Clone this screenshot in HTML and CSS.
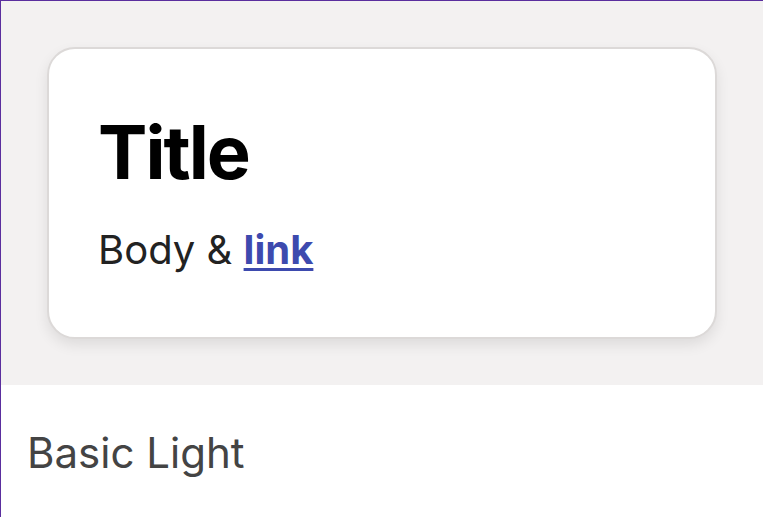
FILE: index.html
```html
<!DOCTYPE html>
<html lang="en">
<head>
<meta charset="UTF-8">
<meta name="viewport" content="width=device-width, initial-scale=1.0">
<title>Basic Light</title>
<link rel="stylesheet" href="styles.css">
</head>
<body>

<div class="frame">
    <div class="preview">
        <div class="card">
            <h1>Title</h1>
            <p>Body &amp; <a href="#">link</a></p>
        </div>
    </div>
    <div class="label">Basic Light</div>
</div>

</body>
</html>
```

FILE: styles.css
```css
* { margin: 0; padding: 0; box-sizing: border-box; }
html, body { height: 100%; }
body { font-family: Inter, "Noto Sans", sans-serif; background: white; }

.frame { height: 100%; border-left: 1px solid #5a2e9e; border-top: 1px solid #5a2e9e; }
.preview { background: #f3f1f1; padding: 46px 46px 46px 46px; }

.card { background: white; border: 2px solid #dcd9d8; border-radius: 28px; height: 292px; padding: 57px 49px 0; box-shadow: 0 6px 14px rgba(0,0,0,0.09); }
.card h1 { font-size: 74px; font-weight: 700; line-height: 92px; letter-spacing: -2px; color: #000; }
.card p { font-size: 40px; line-height: 46px; color: #222; margin-top: 29px; }
.card a { color: #3d4aae; font-weight: 700; text-decoration: underline; text-decoration-thickness: 3px; text-underline-offset: 4px; }

.label { padding: 42px 26px; font-size: 42px; color: #444; }
```
